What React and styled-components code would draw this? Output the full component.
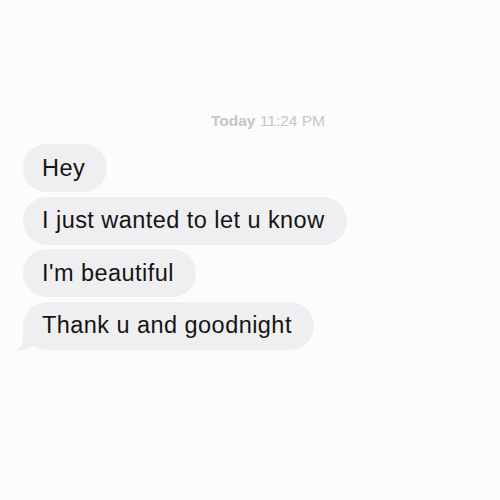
import React from 'react';
import styled, { createGlobalStyle } from 'styled-components';

const GlobalStyle = createGlobalStyle`
	html, body {
		margin: 0;
		padding: 0;
		background: #fcfcfc;
	}
	body {
		font-family: "Liberation Sans", Arial, sans-serif;
	}
`;

const Screen = styled.div`
	width: 500px;
	height: 500px;
	box-sizing: border-box;
	padding: 112px 0 0 23px;
	display: flex;
	flex-direction: column;
	align-items: flex-start;
	background: #fcfcfc;
`;

const Stamp = styled.div`
	align-self: stretch;
	padding-left: 188px;
	font-size: 15.5px;
	color: #c6c6c8;
	margin-bottom: 14px;

	b {
		font-weight: 700;
	}
`;

const Thread = styled.div`
	display: flex;
	flex-direction: column;
	align-items: flex-start;
	gap: 4.5px;
`;

const Bubble = styled.div`
	position: relative;
	height: 48px;
	box-sizing: border-box;
	padding: 0 22px 0 19px;
	display: flex;
	align-items: center;
	background: #efeff1;
	border-radius: 24px;
	font-size: 23.5px;
	letter-spacing: 0.45px;
	color: #141414;
	white-space: nowrap;

	${(p) =>
		p.$tail &&
		`
		&::before {
			content: '';
			position: absolute;
			left: -6px;
			bottom: 0;
			width: 20px;
			height: 20px;
			background: #efeff1;
			border-bottom-right-radius: 16px 14px;
		}
		&::after {
			content: '';
			position: absolute;
			left: -26px;
			bottom: 0;
			width: 26px;
			height: 22px;
			background: #fcfcfc;
			border-bottom-right-radius: 10px;
		}
	`}
`;

const messages = ['Hey', 'I just wanted to let u know', "I'm beautiful", 'Thank u and goodnight'];

export default function App() {
	return (
		<>
			<GlobalStyle />
			<Screen>
				<Stamp>
					<b>Today</b> 11:24 PM
				</Stamp>
				<Thread>
					{messages.map((text, i) => (
						<Bubble key={i} $tail={i === messages.length - 1}>
							{text}
						</Bubble>
					))}
				</Thread>
			</Screen>
		</>
	);
}
